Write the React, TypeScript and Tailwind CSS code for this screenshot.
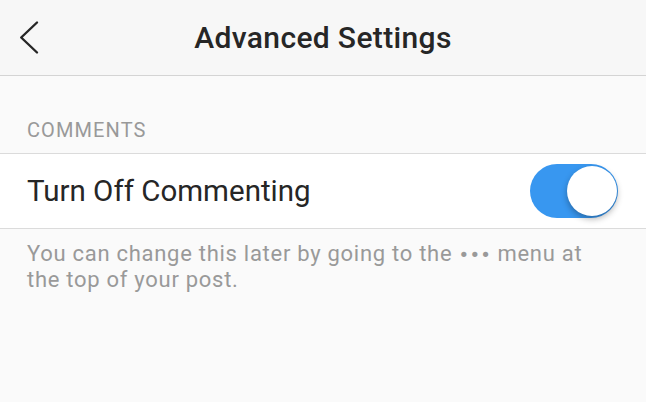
import React from "react";

const App = () => {
  return (
    <div
      className="w-[646px] h-[402px] bg-[#fafafa] overflow-hidden"
      style={{ fontFamily: "Roboto, 'Noto Sans', sans-serif" }}
    >
      <div className="relative h-[76px] bg-[#f7f7f7] border-b border-[#d4d4d4] flex items-center justify-center">
        <button className="absolute left-[18px] top-[20px] w-[22px] h-[36px]">
          <svg viewBox="0 0 22 36" className="w-[22px] h-[36px]" fill="none">
            <path d="M19 2.5 L3.2 17.5 L19 32.5" stroke="#262626" strokeWidth="2.4" strokeLinecap="round" strokeLinejoin="round" />
          </svg>
        </button>
        <h1 className="text-[30px] leading-[36px] font-medium text-[#262626] tracking-[0.35px]">Advanced Settings</h1>
      </div>

      <div className="pt-[42px] pb-[11px] px-[27px]">
        <h2 className="text-[20px] leading-[24px] text-[#999999] tracking-[1.1px]">COMMENTS</h2>
      </div>

      <div className="h-[76px] bg-white border-y border-[#dbdbdb] flex items-center justify-between pl-[27px] pr-[28px]">
        <span className="text-[29.5px] leading-[36px] text-[#262626]">Turn Off Commenting</span>
        <div className="w-[88px] h-[54px] rounded-full bg-[#3897f0] flex items-center justify-end pr-[1px]">
          <div className="w-[50px] h-[50px] rounded-full bg-white shadow-[0_3px_6px_rgba(0,0,0,0.3)]" />
        </div>
      </div>

      <p className="pl-[27px] pt-[12px] w-[600px] text-[22px] leading-[26px] text-[#999999] tracking-[0.72px]">
        You can change this later by going to the{" "}
        <span className="font-['DejaVu_Sans'] text-[18px] leading-[20px] tracking-[0.3px]">•••</span> menu at the top of
        your post.
      </p>
    </div>
  );
};

export default App;
